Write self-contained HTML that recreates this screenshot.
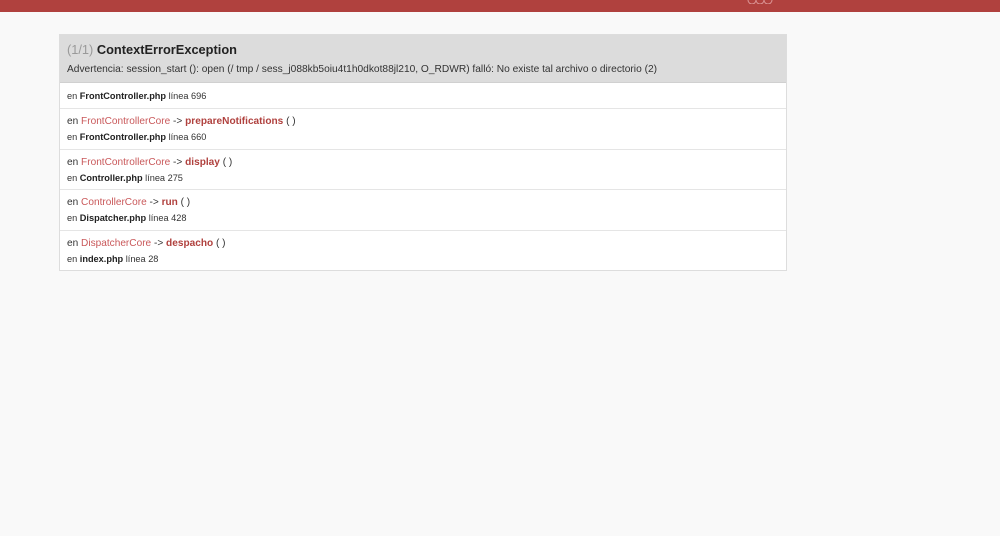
<!DOCTYPE html>
<html><head><meta charset="utf-8"><style>
body{margin:0;background:#f9f9f9;font-family:"Liberation Sans",Arial,sans-serif;color:#333;width:1000px;height:536px;overflow:hidden;position:relative}
.top{position:absolute;left:0;top:0;width:1000px;height:12px;background:#b0413e}
.box{position:absolute;left:59px;top:34px;width:726px;border:1px solid #ddd;background:#fff}
.hd{background:#dcdcdc;height:47px;padding:0 7px;border-bottom:1px solid #d0d0d0}
.t{position:absolute;top:7px;left:7px;font-size:12.8px;font-weight:bold;color:#222}
.t span{color:#999;font-weight:normal}
.m{position:absolute;top:29px;left:7px;font-size:10.2px;color:#333}
.r{border-top:1px solid #e5e5e5;padding:0 7px;font-size:9.2px;position:relative}
.r div{position:absolute;left:7px}
.c{color:#c9585a}.f{color:#b0413e;font-weight:bold}b{color:#222}
.l1{top:7px;font-size:10.1px}.l2{top:23px}
</style></head><body>
<div class="top"><svg width="30" height="6" style="position:absolute;left:747px;top:-2px" fill="none" stroke="#d99" stroke-width="1"><circle cx="5" cy="2" r="4"/><circle cx="13" cy="2" r="4"/><circle cx="21" cy="2" r="4"/></svg></div>
<div class="box">
<div class="hd"><div class="t"><span>(1/1)</span> ContextErrorException</div>
<div class="m">Advertencia: session_start (): open (/ tmp / sess_j088kb5oiu4t1h0dkot88jl210, O_RDWR) falló: No existe tal archivo o directorio (2)</div></div>
<div class="r" style="height:25px;border-top:none"><div style="top:8px">en <b>FrontController.php</b> línea 696</div></div>
<div class="r" style="height:40px"><div class="l1">en <span class="c">FrontControllerCore</span> -&gt; <span class="f">prepareNotifications</span> ( )</div><div class="l2">en <b>FrontController.php</b> línea 660</div></div>
<div class="r" style="height:39px"><div class="l1">en <span class="c">FrontControllerCore</span> -&gt; <span class="f">display</span> ( )</div><div class="l2">en <b>Controller.php</b> línea 275</div></div>
<div class="r" style="height:40px"><div class="l1">en <span class="c">ControllerCore</span> -&gt; <span class="f">run</span> ( )</div><div class="l2">en <b>Dispatcher.php</b> línea 428</div></div>
<div class="r" style="height:39px"><div class="l1">en <span class="c">DispatcherCore</span> -&gt; <span class="f">despacho</span> ( )</div><div class="l2">en <b>index.php</b> línea 28</div></div>
</div>
</body></html>
